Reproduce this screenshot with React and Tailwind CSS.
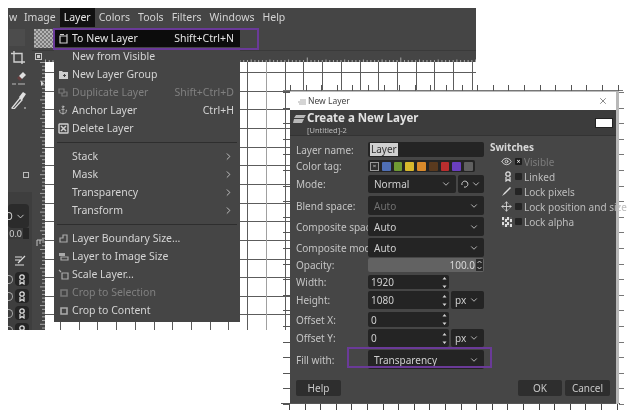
import React from "react";
import { X, ChevronDown, ChevronRight, Anchor, Eye, Move } from "lucide-react";

const FONT = "[font-family:'Noto_Sans','Open_Sans',sans-serif]";

function CanvasGrid() {
  const v = Array.from({ length: 23 }, (_, i) => 60 + 18.72 * i);
  const h = Array.from({ length: 14 }, (_, i) => 72 + 18.65 * i);
  return (
    <svg width="431" height="268" className="block">
      {h.map((y) => (
        <line key={y} x1="0" x2="431" y1={Math.round(y) - 62 + 0.5} y2={Math.round(y) - 62 + 0.5} stroke="#5c5c5c" />
      ))}
      {v.map((x, i) => (
        <line key={x} x1={Math.round(x) - 45 + 0.5} x2={Math.round(x) - 45 + 0.5} y1="0" y2="268" stroke={i === 11 ? "#a0a0a0" : "#5c5c5c"} />
      ))}
    </svg>
  );
}

function TopRuler() {
  return (
    <svg width="431" height="11" className="block">
      {Array.from({ length: 116 }, (_, i) => {
        const x = i * 3.74 + 0.5;
        const big = i % 5 === 0 ? 8.5 : 9;
        return <line key={i} x1={x} x2={x} y1={i % 25 === 20 ? 6.5 : big} y2="11" stroke="#a8a8a8" />;
      })}
    </svg>
  );
}

function LeftRuler() {
  return (
    <svg width="13" height="268" className="block">
      {Array.from({ length: 72 }, (_, i) => {
        const y = i * 3.74 + 0.5;
        const big = i % 5 === 0;
        return <line key={i} x1={big ? 8 : 10} x2="13" y1={y} y2={y} stroke="#a8a8a8" />;
      })}
      <path d="M9 19l3 2.5-3 2.5z" fill="#ddd" />
      <path d="M5 178h7M5 178v6M8 178v4" stroke="#c0c0c0" fill="none" />
    </svg>
  );
}

function DialogRulers() {
  const tx = Array.from({ length: 22 }, (_, i) => 290 + 15.6 * i);
  const ty = Array.from({ length: 21 }, (_, i) => 92 + 15.6 * i);
  return (
    <svg width="640" height="416" className="absolute left-0 top-0">
      <line x1="283" x2="623" y1="90.5" y2="90.5" stroke="#777" />
      <line x1="281" x2="620" y1="403.5" y2="403.5" stroke="#555" />
      {tx.map((x) => (
        <g key={x}>
          <line x1={Math.round(x) + 0.5} x2={Math.round(x) + 0.5} y1="85" y2="91" stroke="#555" />
          <line x1={Math.round(x) - 1 + 0.5} x2={Math.round(x) - 1 + 0.5} y1="404" y2="410" stroke="#444" />
        </g>
      ))}
      {ty.map((y) => (
        <g key={y}>
          <line x1="283" x2="290" y1={Math.round(y) + 0.5} y2={Math.round(y) + 0.5} stroke="#555" />
          <line x1="619" x2="624" y1={Math.round(y) + 0.5} y2={Math.round(y) + 0.5} stroke="#777" />
        </g>
      ))}
      <rect x="616" y="91" width="3" height="313" fill="#b8b8b8" />
    </svg>
  );
}

const S = { fill: "none", stroke: "currentColor", strokeWidth: 1.2 };

function MIcon({ name }) {
  if (name === "anchor") return <Anchor size={10} strokeWidth={1.6} />;
  const paths = {
    newlayer: <path d="M2 3h7v7H2zM2 1.5h4M9 1v3" {...S} />,
    group: <g><path d="M1 2h3l1 1h5v7H1z" fill="currentColor" /><path d="M5 6.5h3M6.5 5v3" stroke="#444" /></g>,
    dup: <path d="M1 2h5v4H1zM4 6v3h5V5H6" {...S} />,
    del: <g><rect x="1" y="1" width="9" height="9" rx="0.5" {...S} strokeWidth="1.4" /><path d="M3 3l5 5M8 3l-5 5" stroke="currentColor" strokeWidth="1.5" /></g>,
    bound: <path d="M2 9V5h3V2h4v7z" {...S} />,
    toimg: <g><path d="M1 2h6v3H1z" fill="currentColor" /><path d="M3 6h7v3H3z" {...S} /></g>,
    scale: <g><path d="M4 4h6v6H4z" {...S} /><path d="M1 1l2 2" {...S} /></g>,
    crop: <path d="M3 3h6v6H3z" {...S} strokeWidth="1.6" />,
  };
  return <svg width="11" height="11" viewBox="0 0 11 11">{paths[name]}</svg>;
}

const menuRows = [
  { t: "To New Layer", k: "Shift+Ctrl+N", i: "newlayer", active: true },
  { t: "New from Visible" },
  { t: "New Layer Group", i: "group" },
  { t: "Duplicate Layer", k: "Shift+Ctrl+D", i: "dup", off: true },
  { t: "Anchor Layer", k: "Ctrl+H", i: "anchor" },
  { t: "Delete Layer", i: "del" },
  { sep: true },
  { t: "Stack", sub: true },
  { t: "Mask", sub: true },
  { t: "Transparency", sub: true },
  { t: "Transform", sub: true },
  { sep: true },
  { t: "Layer Boundary Size...", i: "bound", dim: true },
  { t: "Layer to Image Size", i: "toimg", dim: true },
  { t: "Scale Layer...", i: "scale", dim: true },
  { t: "Crop to Selection", i: "crop", off: true },
  { t: "Crop to Content", i: "crop", dim: true },
];

function LayerMenu() {
  return (
    <div className="absolute left-[46px] top-[19px] z-10 w-[186px] h-[295px] bg-[#454545] pt-[2px] text-[10.5px] leading-none text-[#d4d4d4]">
      {menuRows.map((r, idx) =>
        r.sep ? (
          <div key={idx} className="h-[10px] flex items-center px-[3px] first:h-[11px]">
            <div className="h-px w-full bg-[#2e2e2e]" />
          </div>
        ) : (
          <div
            key={idx}
            className={
              "h-[18px] flex items-center pl-[4px] pr-[6px] " +
              (r.active ? "bg-[#0c0c0c] text-[#e4e4e4] " : "") +
              (r.off ? "text-[#808080] " : "")
            }
          >
            <span className={"w-[14px] flex justify-start " + (r.off ? "text-[#777]" : r.dim ? "text-[#aaa]" : "text-[#cfcfcf]")}>
              {r.i ? <MIcon name={r.i} /> : null}
            </span>
            <span className="flex-1">{r.t}</span>
            {r.k ? <span>{r.k}</span> : null}
            {r.sub ? <ChevronRight size={11} strokeWidth={1.8} /> : null}
          </div>
        )
      )}
    </div>
  );
}

function LinkIcon() {
  return (
    <svg width="8" height="11" viewBox="0 0 8 11">
      <circle cx="4" cy="3" r="2.2" fill="none" stroke="#ddd" strokeWidth="1.3" />
      <path d="M2 6v4l2-1.5L6 10V6" fill="none" stroke="#ddd" strokeWidth="1.2" />
    </svg>
  );
}

function Dock() {
  return (
    <div className="w-[24px] h-full bg-[#454545] flex flex-col overflow-hidden text-[#d0d0d0]">
      <div className="h-[24px] shrink-0 pt-[2px]"><div className="w-[16px] h-[17px] ml-[1px] bg-[#4c4c4c]" /></div>
      <div className="h-[121px] shrink-0 flex flex-col items-start pl-[3px]">
        <svg width="14" height="14" viewBox="0 0 14 14" className="mt-[0px]">
          <path d="M3 0v11h11" fill="none" stroke="#cfcfcf" strokeWidth="1.4" />
          <path d="M0 2.5h11v10.5" fill="none" stroke="#cfcfcf" strokeWidth="1.4" />
        </svg>
        <svg width="16" height="16" viewBox="0 0 16 16" className="mt-[5px]">
          <path d="M8 6l4-4 3 3-4 4z" fill="#e0e0e0" />
          <path d="M6 8l2-2 3 3-2 2z" fill="#a33" opacity="0.35" />
          <path d="M1 14h4M7 14h7" stroke="#bbb" strokeWidth="1.2" />
        </svg>
        <svg width="16" height="18" viewBox="0 0 16 18" className="mt-[5px]">
          <path d="M1 17l8-10 2 2-8 9z" fill="none" stroke="#ddd" strokeWidth="1.3" />
          <path d="M8 6l4-5 3 2-4 6z" fill="#e0e0e0" />
          <circle cx="14" cy="17" r="0.8" fill="#eee" />
        </svg>
      </div>
      <div className="h-[20px] shrink-0 flex justify-end items-start pr-[0px]">
        <div className="w-[6px] h-[6px] border border-[#bbb] mr-[3px]" />
      </div>
      <div className="flex-1 bg-[#3e3e3e] flex flex-col">
        <div className="h-[12px]" />
        <div className="h-[24px] w-[21px] bg-[#2b2b2b] rounded-sm flex items-center justify-between pr-[3px]">
          <span className="text-[10px] leading-none -ml-[3px]">O</span>
          <ChevronDown size={11} strokeWidth={2} />
        </div>
        <div className="h-[11px] w-[21px] bg-[#3a3a3a] flex items-center justify-end mt-[0px]">
          <span className="text-[9px] leading-none">0.0</span>
          <span className="w-[6px] h-[11px] bg-[#262626] ml-px" />
        </div>
        <div className="h-[16px]" />
        <div className="h-[10px] flex justify-end pr-[5px] text-[#ddd]">
          <svg width="13" height="11" viewBox="0 0 13 11">
            <path d="M1 2h7M1 5h5M1 10h9M4 8l7-7" stroke="#ddd" strokeWidth="1.2" fill="none" />
          </svg>
        </div>
        <div className="h-[7px]" />
        {[0, 1, 2, 3, 4].map((i) => (
          <div key={i} className="h-[14px] w-[21px] mb-[3px] flex items-center justify-between shrink-0">
            <span className="w-[5px] h-[9px] rounded-r-full border-r border-t border-b border-[#aaa]" />
            <span className="w-[14px] h-[14px] rounded-sm bg-[#252525] flex items-center justify-center"><LinkIcon /></span>
          </div>
        ))}
      </div>
    </div>
  );
}

function GimpWindow() {
  const names = [
    { t: "w", c: "w-[12px] pl-[1px]" },
    { t: "Image", c: "px-[4px]" },
    { t: "Layer", c: "px-[4px] bg-[#111] text-[#e8e8e8]" },
    { t: "Colors", c: "px-[4px]" },
    { t: "Tools", c: "px-[4px]" },
    { t: "Filters", c: "px-[4px]" },
    { t: "Windows", c: "px-[4px]" },
    { t: "Help", c: "px-[4px]" },
  ];
  return (
    <div className="absolute left-[8px] top-[8px] w-[468px] h-[322px] flex flex-col">
      <div className="h-[19px] shrink-0 bg-[#454545] flex items-stretch text-[10.5px] text-[#d4d4d4]">
        {names.map((n) => (
          <span key={n.t} className={"flex items-center " + n.c}>{n.t}</span>
        ))}
      </div>
      <div className="flex-1 flex min-h-0">
        <Dock />
        <div className="flex-1 flex flex-col min-w-0">
          <div className="h-[24px] shrink-0 bg-[#454545] border-b border-[#3a3a3a] pt-[2px] pl-[2px]">
            <div className="w-[20px] h-[19px] bg-[repeating-conic-gradient(#7a7a7a_0_25%,#b4b4b4_0_50%)] bg-[length:4px_4px]" />
          </div>
          <div className="h-[11px] shrink-0 bg-[#454545] flex">
            <div className="w-[13px] flex items-center justify-center">
              <div className="w-[7px] h-[7px] border border-[#c8c8c8] flex items-center justify-center">
                <div className="w-[3px] h-[3px] bg-[#c8c8c8]" />
              </div>
            </div>
            <TopRuler />
          </div>
          <div className="flex-1 flex min-h-0">
            <div className="w-[13px] bg-[#454545]"><LeftRuler /></div>
            <div className="flex-1 bg-white"><CanvasGrid /></div>
          </div>
        </div>
      </div>
      <LayerMenu />
    </div>
  );
}

const F = "bg-[#242424] rounded-[2px]";

function Drop({ text, off, cls }) {
  return (
    <div className={F + " flex items-center justify-between pl-[6px] pr-[5px] h-full " + (cls || "flex-1")}>
      <span className={off ? "text-[#707070]" : "text-[#cfcfcf]"}>{text}</span>
      <ChevronDown size={10} strokeWidth={2} className="text-[#cfcfcf]" />
    </div>
  );
}

function Spin({ text, cls }) {
  return (
    <div className={F + " flex items-center justify-between pl-[3px] pr-[2px] h-full " + cls}>
      <span className="text-[#cfcfcf]">{text}</span>
      <svg width="5" height="13" viewBox="0 0 5 13">
        <path d="M0.5 3.5L2.5 1l2 2.5zM0.5 9.5l2 2.5 2-2.5z" fill="#d4d4d4" />
      </svg>
    </div>
  );
}

const tags = ["#4f6fb5", "#6f9a33", "#d8b82c", "#d98a2b", "#5a3a1e", "#b82e2e", "#6a3fc0", "#606060"];

function ColorTags() {
  return (
    <div className={F + " flex items-center gap-[3px] h-full w-[107px] px-[2px]"}>
      <span className="w-[9px] h-[9px] bg-[#2f2f2f] border border-[#999] flex items-center justify-center text-[6px] leading-none text-[#ccc]">×</span>
      {tags.map((c) => (
        <span key={c} style={{ backgroundColor: c }} className="w-[9px] h-[9px] rounded-[1px]" />
      ))}
    </div>
  );
}

function Form() {
  const rows = [
    ["Layer name:", "h-[15px] mb-[3px]", <div className={F + " flex items-center h-full flex-1 pl-[2px]"}><span className="bg-[#d0d0d0] text-[#333] leading-[13px] px-px">Layer</span></div>],
    ["Color tag:", "h-[12px] mb-[3px]", <ColorTags />],
    ["Mode:", "h-[18px] mb-[3px]", <div className="flex gap-[2px] h-full flex-1"><Drop text="Normal" cls="w-[88px]" /><div className={F + " flex items-center justify-between px-[3px] flex-1 text-[#cfcfcf]"}><svg width="8" height="8" viewBox="0 0 8 8"><path d="M1 5a3 3 0 1 1 2 2" fill="none" stroke="#cfcfcf" /></svg><ChevronDown size={10} strokeWidth={2} /></div></div>],
    ["Blend space:", "h-[19px] mb-[2px]", <Drop text="Auto" off />],
    ["Composite space:", "h-[19px] mb-[2px]", <Drop text="Auto" />],
    ["Composite mode:", "h-[19px] mb-[1px]", <Drop text="Auto" />],
    ["Opacity:", "h-[14px] mb-[3px]", <div className="flex-1 h-full bg-[#626262] rounded-[2px] flex items-center justify-end pr-px text-[#d8d8d8]"><span>100.0</span><span className="ml-[1px] w-[7px] h-[12px] bg-[#2a2a2a] flex flex-col items-center justify-center"><svg width="5" height="10" viewBox="0 0 5 10"><path d="M0.5 3L2.5 1l2 2M0.5 7l2 2 2-2" fill="none" stroke="#ccc" /></svg></span></div>],
    ["Width:", "h-[14px] mb-[2px]", <Spin text="1920" cls="w-[81px]" />],
    ["Height:", "h-[18px] mb-[3px]", <div className="flex gap-[2px] h-full flex-1"><Spin text="1080" cls="w-[81px]" /><Drop text="px" cls="flex-1 !pl-[4px]" /></div>],
    ["Offset X:", "h-[15px] mb-[2px]", <Spin text="0" cls="w-[81px]" />],
    ["Offset Y:", "h-[18px] mb-[3px]", <div className="flex gap-[2px] h-full flex-1"><Spin text="0" cls="w-[81px]" /><Drop text="px" cls="flex-1 !pl-[4px]" /></div>],
    ["Fill with:", "h-[19px]", <Drop text="Transparency" />],
  ];
  return (
    <div className="w-[188px] shrink-0 flex flex-col">
      {rows.map(([label, cls, control]) => (
        <div key={label} className={"flex items-center " + cls}>
          <span className="w-[72px] shrink-0 text-[#c4c4c4] whitespace-nowrap">{label}</span>
          {control}
        </div>
      ))}
    </div>
  );
}

function Switches() {
  const rows = [
    { t: "Visible", on: true, icon: <Eye size={11} strokeWidth={2} /> },
    { t: "Linked", icon: <LinkIcon /> },
    { t: "Lock pixels", icon: <svg width="11" height="11" viewBox="0 0 11 11"><path d="M1 10l2-3 6-6 1 1-6 6z" fill="#ddd" /></svg> },
    { t: "Lock position and size", icon: <Move size={11} strokeWidth={2} /> },
    { t: "Lock alpha", icon: <span className="block w-[10px] h-[10px] bg-[repeating-conic-gradient(#555_0_25%,#ddd_0_50%)] bg-[length:5px_5px]" /> },
  ];
  return (
    <div className="flex-1 pl-[6px] -mt-[2px]">
      <div className="font-bold text-[#d8d8d8] h-[14px] flex items-center">Switches</div>
      {rows.map((r) => (
        <div key={r.t} className="flex items-center h-[15px] text-[#bdbdbd]">
          <span className="w-[25px] flex justify-end pr-[3px] text-[#d4d4d4]">{r.icon}</span>
          <span className={"w-[7px] h-[7px] rounded-[1px] flex items-center justify-center text-[7px] leading-none mr-[2px] " + (r.on ? "bg-[#1c1c1c] text-white" : "bg-[#242424]")}>{r.on ? "×" : ""}</span>
          <span className={"whitespace-nowrap " + (r.on ? "text-[#7c7c7c]" : "")}>{r.t}</span>
        </div>
      ))}
    </div>
  );
}

function Btn({ children, cls }) {
  return <div className={"h-[16px] bg-[#2e2e2e] rounded-[2px] flex items-center justify-center text-[#c8c8c8] " + cls}>{children}</div>;
}

function NewLayerDialog() {
  return (
    <div className="absolute left-[290px] top-[91px] w-[326px] h-[312px] flex flex-col text-[10px] leading-none">
      <div className="h-[19px] shrink-0 bg-white border-t border-[#bbb] flex items-center justify-between pl-[8px] pr-[8px] text-[#444] text-[8.5px]">
        <span className="flex items-center gap-[2px]">
          <svg width="8" height="7" viewBox="0 0 8 7"><path d="M0 4h8M2 2h6M1 6h7" stroke="#aaa" /></svg>
          New Layer
        </span>
        <X size={10} strokeWidth={1.5} className="text-[#444]" />
      </div>
      <div className="h-[26px] shrink-0 bg-[#3c3c3c] border-b border-[#333] flex items-center pl-[3px] pr-[3px]">
        <svg width="13" height="11" viewBox="0 0 13 11" className="mr-[1px] -mt-[6px]">
          <path d="M3 1h10l-2 3H1zM1 5h10l-2 4H0z" fill="#b8b8b8" />
        </svg>
        <div className="flex-1 flex flex-col gap-[2px]">
          <span className="text-[11.5px] font-bold text-[#e2e2e2] leading-[12px]">Create a New Layer</span>
          <span className="text-[7.5px] text-[#bcbcbc] leading-[8px]">[Untitled]-2</span>
        </div>
        <div className="w-[18px] h-[10px] bg-white border border-[#222]" />
      </div>
      <div className="flex-1 bg-[#464646] px-[6px] pt-[6px] pb-[7px] flex flex-col">
        <div className="flex flex-1 items-start">
          <Form />
          <Switches />
        </div>
        <div className="flex items-center h-[16px]">
          <Btn cls="w-[45px]">Help</Btn>
          <div className="flex-1" />
          <Btn cls="w-[44px] mr-[3px]">OK</Btn>
          <Btn cls="w-[45px] mr-[0px]">Cancel</Btn>
        </div>
      </div>
    </div>
  );
}

export default function App() {
  return (
    <div className={"relative w-[640px] h-[416px] bg-white overflow-hidden blur-[0.35px] " + FONT}>
      <GimpWindow />
      <DialogRulers />
      <NewLayerDialog />
      <div className="absolute left-[53px] top-[28px] w-[206px] h-[22px] border-2 border-[#6a3a98] z-20" />
      <div className="absolute left-[347px] top-[347px] w-[145px] h-[21px] border-2 border-[#6a3a98] z-20" />
    </div>
  );
}
